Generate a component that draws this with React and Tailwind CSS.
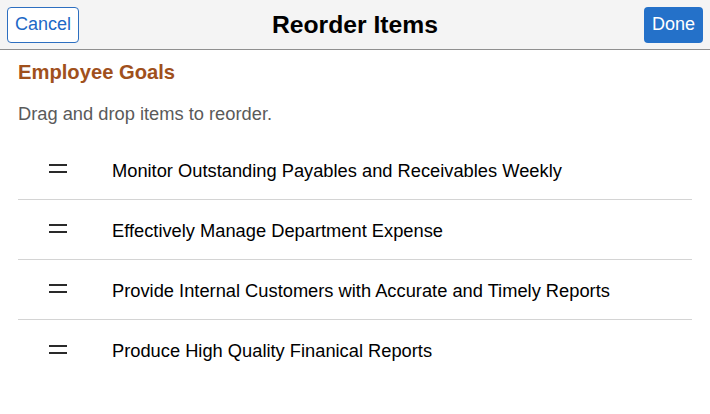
import React from "react";

const items = [
  "Monitor Outstanding Payables and Receivables Weekly",
  "Effectively Manage Department Expense",
  "Provide Internal Customers with Accurate and Timely Reports",
  "Produce High Quality Finanical Reports",
];

const Handle = () => (
  <div className="w-[18px] flex flex-col gap-[5px] -mt-[2px]">
    <div className="h-[2px] bg-[#2a2a2a]"></div>
    <div className="h-[2px] bg-[#2a2a2a]"></div>
  </div>
);

const App = () => {
  return (
    <div className="w-[710px] h-[414px] bg-white font-['Liberation_Sans',Arial,sans-serif]">
      <header className="h-[50px] bg-[#f4f4f4] border-b border-[#8f8f8f] flex items-center justify-between px-[7px] relative">
        <button className="h-[36px] w-[72px] border border-[#2d6fc0] rounded-[4px] bg-white text-[#2068c6] text-[18px]">
          Cancel
        </button>
        <h1 className="absolute left-0 right-0 text-center text-[24.7px] font-bold text-black pointer-events-none">
          Reorder Items
        </h1>
        <button className="h-[36px] w-[59px] rounded-[4px] bg-[#2471c9] text-white text-[18px]">
          Done
        </button>
      </header>

      <div className="px-[18px] pt-[10px]">
        <div className="text-[20.2px] leading-[24px] font-bold text-[#a0501c]">Employee Goals</div>
        <div className="mt-[19px] text-[18.3px] leading-[22px] text-[#5a5a5a]">
          Drag and drop items to reorder.
        </div>

        <ul className="mt-[15px]">
          {items.map((item, i) => (
            <li
              key={i}
              className={`h-[60px] flex items-center ${i < items.length - 1 ? "border-b border-[#d4d4d4]" : ""}`}
            >
              <div className="w-[94px] pl-[31px]">
                <Handle />
              </div>
              <span className="text-[18.3px] leading-[22px] pt-[2px] text-black">{item}</span>
            </li>
          ))}
        </ul>
      </div>
    </div>
  );
};

export default App;
